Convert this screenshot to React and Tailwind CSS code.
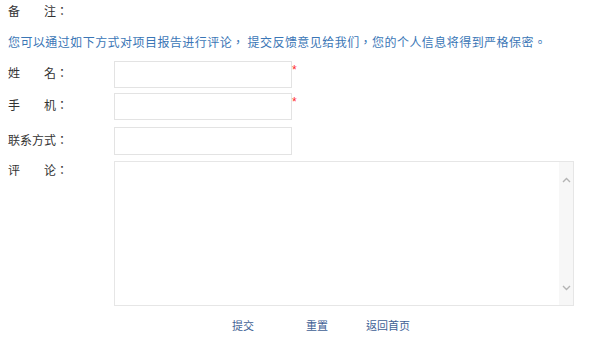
export default function App() {
  const fieldCls =
    "w-[178px] h-[27px] border border-[#e3e3e3] bg-white px-1 text-[12px] outline-none";

  return (
    <div
      className="w-[597px] h-[362px] bg-white text-[#333] text-[12px] overflow-hidden"
      style={{ fontFamily: '"Liberation Sans", "Noto Sans CJK TC", sans-serif' }}
    >
      <div className="h-[24px] leading-[24px] pl-[8px]">备　　注：</div>

      <p className="mt-[7px] h-[24px] leading-[24px] pl-[8px] text-[#3a76b6] whitespace-nowrap tracking-[0.45px]">
        您可以通过如下方式对项目报告进行评论，<span className="ml-[3px]">提交反馈意见给我们，您的个人信息将得到严格保密。</span>
      </p>

      <form className="flex flex-col" onSubmit={(e) => e.preventDefault()}>
        <div className="mt-[6px] flex items-start">
          <label className="w-[114px] pl-[8px] leading-[27px]">姓　　名：</label>
          <input className={fieldCls} />
          <span className="mt-[1px] leading-[16px] text-[12px] text-[#ff2a2a]">*</span>
        </div>

        <div className="mt-[5px] flex items-start">
          <label className="w-[114px] pl-[8px] leading-[27px]">手　　机：</label>
          <input className={fieldCls} />
          <span className="mt-[1px] leading-[16px] text-[12px] text-[#ff2a2a]">*</span>
        </div>

        <div className="mt-[7px] flex items-start">
          <label className="w-[114px] pl-[8px] leading-[28px]">联系方式：</label>
          <input className="w-[178px] h-[28px] border border-[#e3e3e3] bg-white px-1 text-[12px] outline-none" />
        </div>

        <div className="mt-[6px] flex items-start">
          <label className="w-[114px] pl-[8px] leading-[20px]">评　　论：</label>
          <div className="flex w-[460px] h-[145px] border border-[#e6e6e6] bg-white">
            <textarea className="flex-1 resize-none border-0 p-1 text-[12px] outline-none" />
            <div className="w-[14px] bg-[#f7f7f7] flex flex-col items-center justify-between pt-[15px] pb-[14px]">
              <svg width="9" height="6" viewBox="0 0 9 6" fill="none">
                <path d="M1 5L4.5 1.5L8 5" stroke="#b4b4b4" strokeWidth="1.4" />
              </svg>
              <svg width="9" height="6" viewBox="0 0 9 6" fill="none">
                <path d="M1 1L4.5 4.5L8 1" stroke="#b4b4b4" strokeWidth="1.4" />
              </svg>
            </div>
          </div>
        </div>

        <div className="mt-[10px] flex pl-[232px] leading-[20px] text-[11px] text-[#3f5f95]">
          <button type="submit" className="w-[22px]">提交</button>
          <button type="reset" className="ml-[52px] w-[22px]">重置</button>
          <button type="button" className="ml-[38px] w-[44px]">返回首页</button>
        </div>
      </form>
    </div>
  );
}
